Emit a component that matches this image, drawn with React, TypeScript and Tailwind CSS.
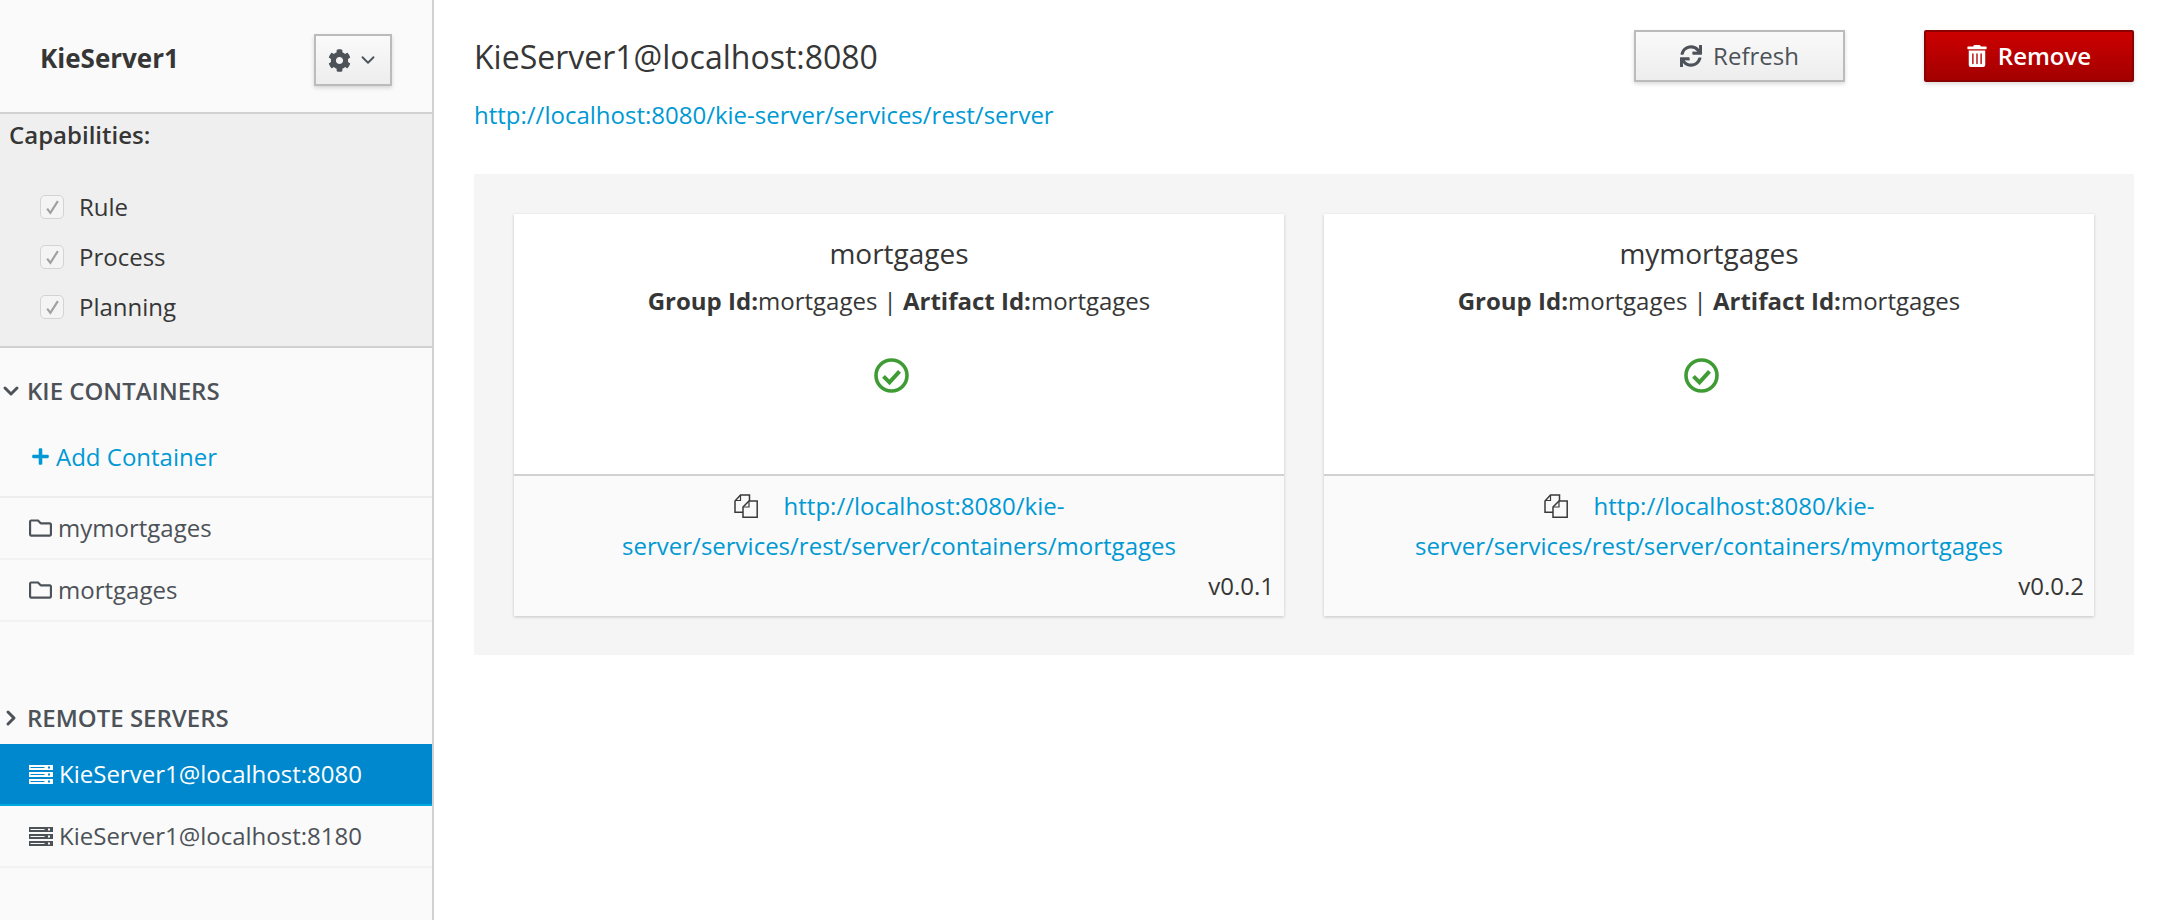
import React from "react";
import { FaCog, FaSync, FaTrashAlt, FaPlus, FaRegFolder } from "react-icons/fa";
import { ChevronDown, ChevronRight } from "lucide-react";

const ServerIcon = ({ className = "" }: { className?: string }) => (
  <svg viewBox="0 0 24 19" className={className} fill="currentColor">
    <path fillRule="evenodd" d="M0 0h24v5H0zM19 1.5h2v2h-2zM1.5 2h14v1H1.5z" />
    <path fillRule="evenodd" d="M0 7h24v5H0zM19 8.5h2v2h-2zM1.5 9h14v1H1.5z" />
    <path fillRule="evenodd" d="M0 14h24v5H0zM19 15.5h2v2h-2zM1.5 16h14v1H1.5z" />
  </svg>
);

const CopyIcon = () => (
  <svg viewBox="0 0 24 24" className="h-[24px] w-[24px] text-[#3a3a3a]" fill="none" stroke="currentColor" strokeWidth="1.5">
    <path d="M9 18.2H1V7l5.5-6H15.5v6" />
    <path d="M6.5 1v5.5H1.5" strokeWidth="1.2" />
    <path d="M9 13l6-6h8.2v16.2H9z" fill="#fafafa" />
    <path d="M15 7v6H9.5" strokeWidth="1.2" />
  </svg>
);

const StatusIcon = () => (
  <svg viewBox="0 0 35 35" className="mr-[15px] mt-[41px] h-[35px] w-[35px]" fill="none" stroke="#3f9c35">
    <circle cx="17.5" cy="17.5" r="15.5" strokeWidth="3.6" />
    <path d="M9.5 18.3l6 6 10-11" strokeWidth="4" />
  </svg>
);

const Check = ({ label }: { label: string }) => (
  <div className="flex h-[50px] items-center gap-[15px]">
    <span className="flex h-[24px] w-[24px] items-center justify-center rounded-[5px] border border-[#d4d4d4] bg-[#f4f4f4]">
      <svg viewBox="0 0 14 14" className="h-[15px] w-[15px]" fill="none" stroke="#a0a0a0" strokeWidth="2">
        <path d="M2 8l3 4 7-11" />
      </svg>
    </span>
    <span className="text-[24px] text-[#363636]">{label}</span>
  </div>
);

const SideRow = ({ icon, text, active = false }: { icon: React.ReactNode; text: string; active?: boolean }) => (
  <div
    className={
      active
        ? "flex h-[62px] shrink-0 items-center gap-[6px] border-b-2 border-[#00a8e1] bg-[#0088ce] pl-[29px] text-[24px] text-white"
        : "flex h-[62px] shrink-0 items-center gap-[6px] border-b-2 border-[#f2f2f2] pl-[29px] text-[24px] text-[#4d5258]"
    }
  >
    {icon}
    <span>{text}</span>
  </div>
);

const Card = ({ name, url, version }: { name: string; url: string[]; version: string }) => (
  <div className="flex h-[402px] w-[770px] flex-col bg-white shadow-[0_1px_3px_rgba(0,0,0,0.2)]">
    <div className="flex h-[262px] flex-col items-center border-b-2 border-[#d1d1d1]">
      <div className="mt-[20px] text-[28px] leading-[38px] text-[#363636]">{name}</div>
      <div className="mt-[13px] text-[24px] leading-[32px] text-[#363636]">
        <b className="font-bold">Group Id:</b>
        mortgages | <b className="font-bold">Artifact Id:</b>
        mortgages
      </div>
      <StatusIcon />
    </div>
    <div className="relative flex-1 bg-[#fafafa] pt-[10px] text-center text-[24px] leading-[40px] text-[#0099d3]">
      <div className="flex items-center justify-center gap-[26px]">
        <CopyIcon />
        <span>{url[0]}</span>
      </div>
      <div>{url[1]}</div>
      <div className="absolute bottom-[10px] right-[10px] text-[#363636]">{version}</div>
    </div>
  </div>
);

export default function App() {
  return (
    <div className="flex h-[920px] w-[2168px] overflow-hidden bg-white font-['Open_Sans',sans-serif]">
      <aside className="flex w-[434px] shrink-0 flex-col border-r-2 border-[#d1d1d1] bg-[#fafafa]">
        <div className="flex h-[114px] shrink-0 items-center justify-between border-b-2 border-[#d1d1d1] pl-[40px] pr-[40px] pt-[6px]">
          <span className="mb-[2px] text-[26px] font-bold text-[#363636]">KieServer1</span>
          <button className="mt-[2px] flex h-[52px] w-[78px] items-center justify-center gap-[6px] border-2 border-[#bbbbbb] bg-gradient-to-b from-[#fafafa] to-[#ededed] text-[#4d5258] shadow-[0_2px_4px_rgba(0,0,0,0.15)]">
            <FaCog className="h-[23px] w-[23px]" />
            <ChevronDown className="h-[22px] w-[22px]" strokeWidth={2} />
          </button>
        </div>
        <div className="h-[234px] shrink-0 border-b-2 border-[#d1d1d1] bg-[#efefef] pl-[9px]">
          <div className="pt-[4px] text-[24px] font-semibold leading-[33px] text-[#363636]">Capabilities:</div>
          <div className="pl-[31px] pt-[31px]">
            <Check label="Rule" />
            <Check label="Process" />
            <Check label="Planning" />
          </div>
        </div>
        <div className="flex h-[86px] shrink-0 items-center gap-[3px] text-[24px] font-semibold uppercase text-[#4d5258]">
          <ChevronDown className="-ml-[1px] -mr-[1px] h-[24px] w-[24px] shrink-0" strokeWidth={3} />
          <span className="ml-[2px]">KIE CONTAINERS</span>
        </div>
        <div className="flex h-[64px] shrink-0 items-center gap-[6px] border-b-2 border-[#ededed] pb-[17px] pl-[31px] text-[24px] text-[#0099d3]">
          <FaPlus className="h-[19px] w-[19px]" />
          <span>Add Container</span>
        </div>
        <SideRow icon={<FaRegFolder className="h-[24px] w-[23px]" />} text="mymortgages" />
        <SideRow icon={<FaRegFolder className="h-[24px] w-[23px]" />} text="mortgages" />
        <div className="flex h-[122px] shrink-0 items-center gap-[3px] pt-[69px] text-[24px] font-semibold uppercase text-[#4d5258]">
          <ChevronRight className="-ml-[1px] -mr-[1px] h-[24px] w-[24px] shrink-0" strokeWidth={3} />
          <span className="ml-[2px]">REMOTE SERVERS</span>
        </div>
        <SideRow active icon={<ServerIcon className="h-[19px] w-[24px]" />} text="KieServer1@localhost:8080" />
        <SideRow icon={<ServerIcon className="h-[19px] w-[24px]" />} text="KieServer1@localhost:8180" />
      </aside>
      <main className="min-w-0 flex-1 pl-[40px] pr-[34px]">
        <div className="flex h-[174px] justify-between pt-[30px]">
          <div className="pt-[7px]">
            <h1 className="text-[32px] leading-[40px] text-[#363636]">KieServer1@localhost:8080</h1>
            <a className="mt-[21px] block text-[24px] leading-[33px] text-[#0099d3]">http://localhost:8080/kie-server/services/rest/server</a>
          </div>
          <div className="flex h-[52px] gap-[79px]">
            <button className="flex w-[211px] items-center justify-center gap-[11px] border-2 border-[#bbbbbb] bg-gradient-to-b from-[#fafafa] to-[#ededed] pb-[1px] text-[24px] text-[#4d5258] shadow-[0_2px_4px_rgba(0,0,0,0.15)]">
              <FaSync className="h-[22px] w-[22px]" />
              Refresh
            </button>
            <button className="flex w-[210px] items-center justify-center gap-[11px] rounded-[2px] border-2 border-[#8b0000] bg-gradient-to-b from-[#cc0000] to-[#a30000] pb-[1px] text-[24px] font-semibold text-white shadow-[0_2px_4px_rgba(0,0,0,0.15)]">
              <FaTrashAlt className="h-[22px] w-[20px]" />
              Remove
            </button>
          </div>
        </div>
        <section className="flex h-[481px] gap-[40px] bg-[#f5f5f5] p-[40px]">
          <Card name="mortgages" url={["http://localhost:8080/kie-", "server/services/rest/server/containers/mortgages"]} version="v0.0.1" />
          <Card name="mymortgages" url={["http://localhost:8080/kie-", "server/services/rest/server/containers/mymortgages"]} version="v0.0.2" />
        </section>
      </main>
    </div>
  );
}
